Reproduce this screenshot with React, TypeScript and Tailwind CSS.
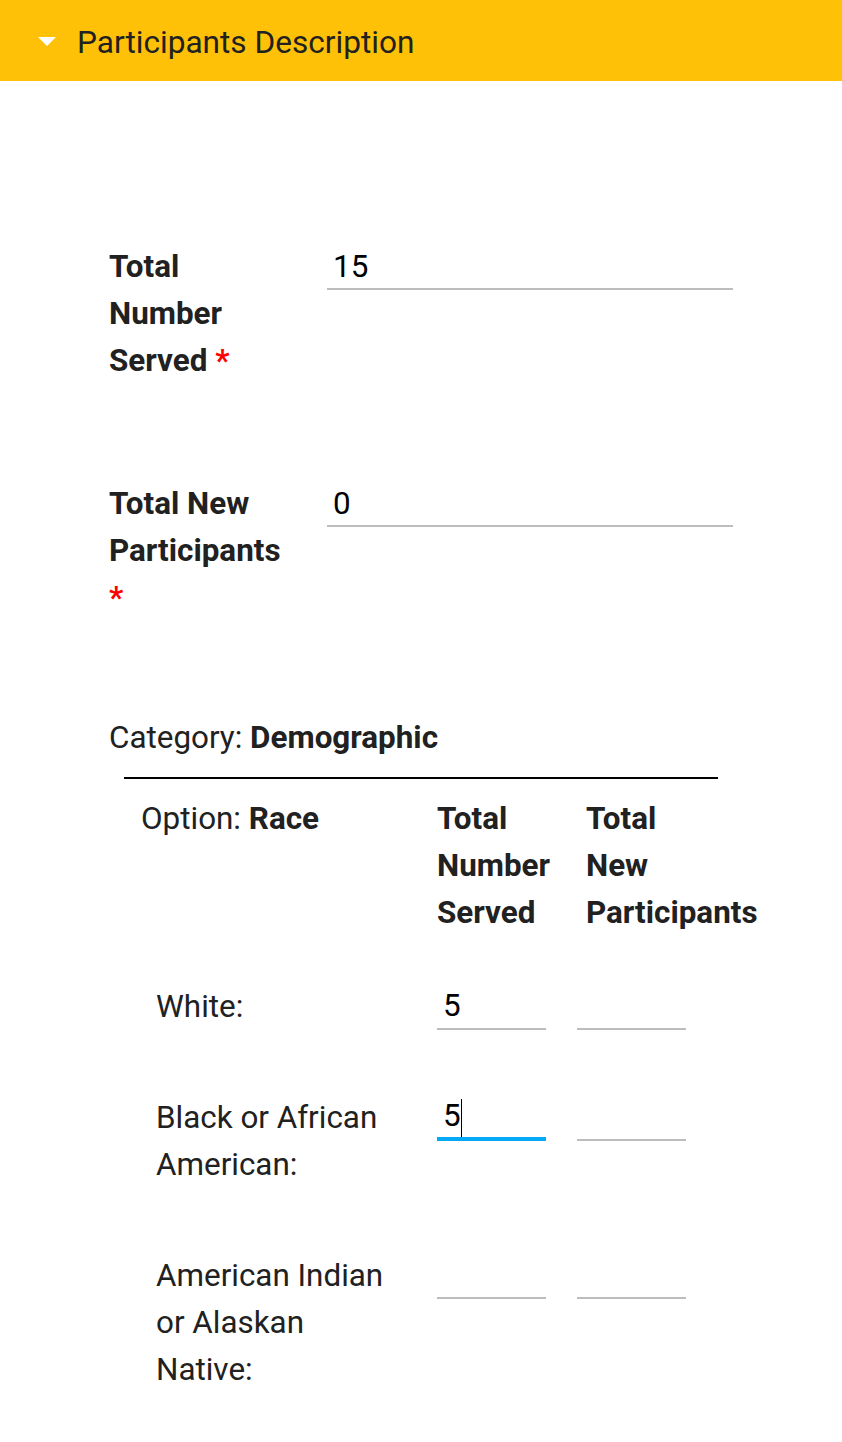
import type { ReactNode } from 'react'

function Req() {
  return <span className="text-[#ff0000]">*</span>
}

function Field({ label, value, className = '' }: { label: ReactNode; value: string; className?: string }) {
  return (
    <div className={`grid grid-cols-[218px_1fr] ${className}`}>
      <div className="w-[180px] font-bold">{label}</div>
      <div className="h-[47px] border-b-2 border-[#bdbdbd] pl-[6px] text-black">{value}</div>
    </div>
  )
}

function NumBox({ value, focused }: { value?: string; focused?: boolean }) {
  return (
    <div
      className={`flex h-[47px] w-[109px] items-center pl-[6px] text-black ${
        focused ? 'border-b-4 border-[#03a9f4]' : 'border-b-2 border-[#bdbdbd]'
      }`}
    >
      {value}
      {focused && <span className="h-[38px] w-px self-end bg-black" />}
    </div>
  )
}

const rows = [
  { label: 'White:', served: '5', focused: false },
  { label: 'Black or African American:', served: '5', focused: true },
  { label: 'American Indian or Alaskan Native:', served: '', focused: false },
]

export default function App() {
  return (
    <div className="min-h-screen bg-white font-['Roboto',sans-serif] text-[31.4px] leading-[47px] text-[#212121]">
      <header className="flex h-[81px] items-center bg-[#ffc107] pl-[38px]">
        <svg width="18" height="9" viewBox="0 0 18 9" className="mt-[2px]">
          <path d="M0 0h18L9 9z" fill="#fff" />
        </svg>
        <span className="mt-[3px] ml-[21px] text-[31.6px]">Participants Description</span>
      </header>

      <div className="mx-auto w-[624px] pt-[162px] pb-[40px]">
        <Field
          label={
            <>
              Total Number Served <Req />
            </>
          }
          value="15"
        />
        <Field
          className="mt-[96px]"
          label={
            <>
              Total New Participants <Req />
            </>
          }
          value="0"
        />

        <div className="mt-[93px]">
          Category: <span className="font-bold">Demographic</span>
        </div>

        <div className="mx-[15px] mt-[16px] border-t-2 border-black pt-[16px]">
          <div className="grid grid-cols-[313px_149px_1fr]">
            <div className="pl-[17px]">
              Option: <span className="font-bold">Race</span>
            </div>
            <div className="font-bold">
              Total
              <br />
              Number
              <br />
              Served
            </div>
            <div className="font-bold whitespace-nowrap">
              Total
              <br />
              New
              <br />
              Participants
            </div>
          </div>

          <div className="mt-[47px] flex flex-col gap-[64px]">
            {rows.map((r) => (
              <div key={r.label} className="grid grid-cols-[313px_140px_1fr]">
                <div className="pr-[36px] pl-[32px]">{r.label}</div>
                <NumBox value={r.served} focused={r.focused} />
                <NumBox />
              </div>
            ))}
          </div>
        </div>
      </div>
    </div>
  )
}
